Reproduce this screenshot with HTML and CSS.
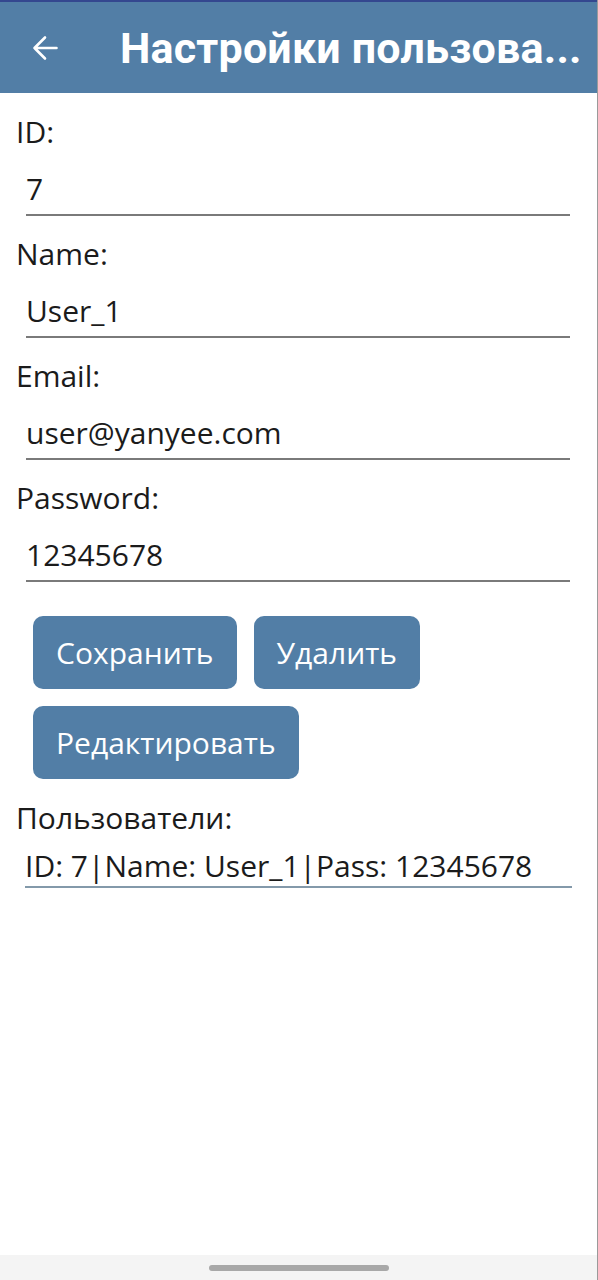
FILE: index.html
```html
<!DOCTYPE html>
<html lang="ru">
<head>
<meta charset="utf-8">
<title>Настройки пользователя</title>
<link rel="stylesheet" href="styles.css">
</head>
<body>
<div class="screen">
  <header class="appbar">
    <button class="back" aria-label="Назад">
      <svg width="26" height="26" viewBox="0 0 26 26"><path d="M24.5 13H2.5M13 2.5 2.5 13 13 23.5" fill="none" stroke="#fff" stroke-width="2.6" stroke-linecap="round" stroke-linejoin="round"/></svg>
    </button>
    <h1 class="title">Настройки пользова...</h1>
  </header>
  <main class="content">
    <div class="field">
      <div class="label">ID:</div>
      <div class="entry">7</div>
    </div>
    <div class="field">
      <div class="label">Name:</div>
      <div class="entry">User_1</div>
    </div>
    <div class="field">
      <div class="label">Email:</div>
      <div class="entry">user@yanyee.com</div>
    </div>
    <div class="field">
      <div class="label">Password:</div>
      <div class="entry">12345678</div>
    </div>
    <div class="buttons">
      <div class="btn-row">
        <button class="btn">Сохранить</button>
        <button class="btn">Удалить</button>
      </div>
      <div class="btn-row">
        <button class="btn">Редактировать</button>
      </div>
    </div>
    <div class="label users-label">Пользователи:</div>
    <div class="list">
      <div class="list-item">ID: 7|Name: User_1|Pass: 12345678</div>
    </div>
  </main>
  <div class="navbar"><span class="pill"></span></div>
</div>
</body>
</html>
```
FILE: styles.css
```css
html, body {
  margin: 0;
  padding: 0;
  background: #ffffff;
}

.screen {
  width: 598px;
  height: 1280px;
  box-sizing: border-box;
  border-right: 1px solid #9a9a9a;
  display: flex;
  flex-direction: column;
  font-family: "Open Sans", "Noto Sans", sans-serif;
  color: #1b1b1b;
}

.appbar {
  height: 93px;
  box-sizing: border-box;
  border-top: 2px solid #34478f;
  background: #527ea6;
  display: flex;
  align-items: center;
  flex-shrink: 0;
}

.back {
  width: 26px;
  height: 26px;
  margin-left: 32px;
  padding: 0;
  border: 0;
  background: none;
  display: flex;
}

.title {
  margin: 0 0 0 62px;
  font-family: Roboto, "Noto Sans", sans-serif;
  font-weight: 700;
  font-size: 43px;
  line-height: 50px;
  color: #ffffff;
  white-space: nowrap;
  letter-spacing: 0.2px;
}

.content {
  flex: 1;
  padding: 18px 0 0 16px;
}

.field {
  display: flow-root;
}

.label {
  font-size: 30px;
  line-height: 41px;
}

.entry {
  font-size: 30px;
  line-height: 41px;
  margin: 16px 27px 17px 10px;
  padding-bottom: 5px;
  border-bottom: 2px solid #7a7a7a;
}

.buttons {
  margin: 17px 0 0 17px;
  display: flex;
  flex-direction: column;
  gap: 17px;
}

.btn-row {
  display: flex;
  gap: 17px;
}

.btn {
  height: 73px;
  padding: 0 23px;
  border: 0;
  border-radius: 10px;
  background: #527ea6;
  color: #ffffff;
  font-family: "Open Sans", "Noto Sans", sans-serif;
  font-size: 30px;
  line-height: 41px;
}

.users-label {
  margin-top: 18px;
}

.list {
  margin: 7px 25px 0 9px;
}

.list-item {
  font-size: 30px;
  line-height: 41px;
  white-space: nowrap;
  border-bottom: 2px solid #8399aa;
}

.navbar {
  height: 25px;
  flex-shrink: 0;
  background: #f4f4f4;
  display: flex;
  justify-content: center;
  align-items: center;
}

.pill {
  width: 180px;
  height: 6px;
  border-radius: 3px;
  background: #a8a8a8;
}
```
